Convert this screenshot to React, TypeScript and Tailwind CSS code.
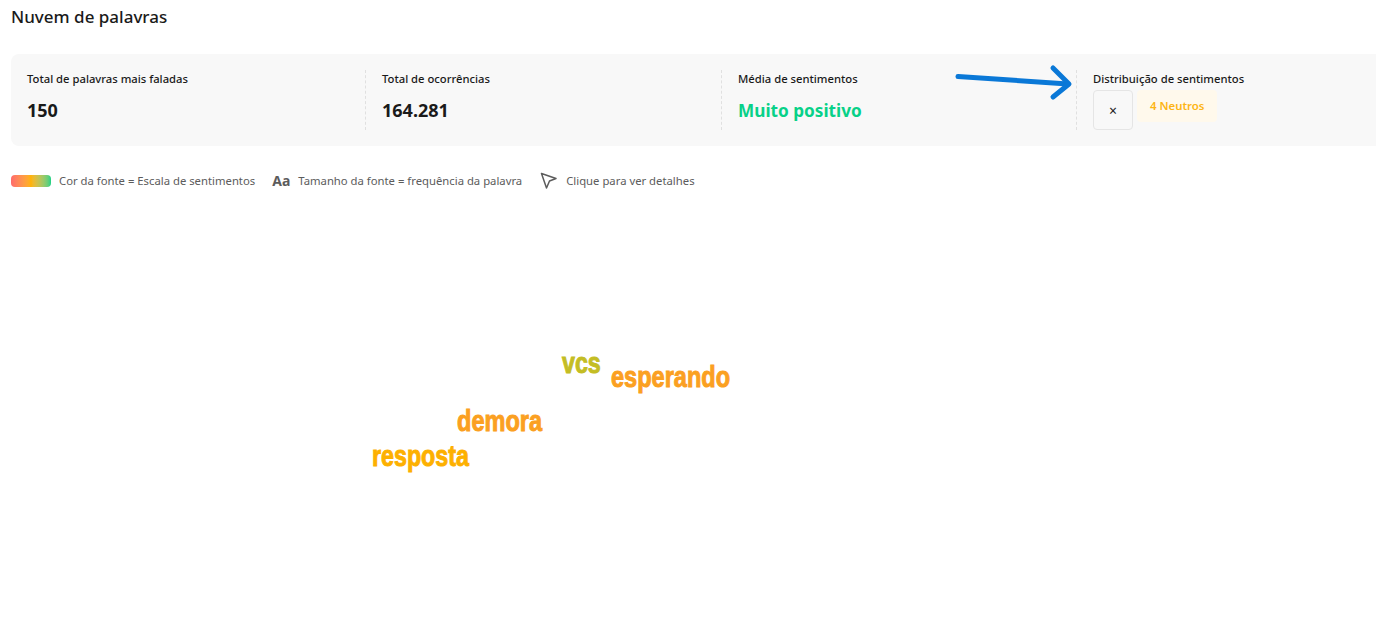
const F = "[font-family:'Noto_Sans','Open_Sans',sans-serif]";

function Stat({ label, children, first, w }: { label: string; children: React.ReactNode; first?: boolean; w: string }) {
  return (
    <div className={`${w} shrink-0 h-[60px] flex flex-col ${first ? "" : "pl-4 border-l border-dashed border-[#e0e0e0]"}`}>
      <div className="text-[11.25px] leading-[18px] font-medium text-[#1a1a1a]">{label}</div>
      {children}
    </div>
  );
}

const words = [
  { t: "vcs", x: 562, y: 349, s: 29, sx: 0.8, c: "#c4bd24" },
  { t: "esperando", x: 611, y: 362, s: 30, sx: 0.785, c: "#fba021" },
  { t: "demora", x: 457, y: 406, s: 30, sx: 0.785, c: "#fba021" },
  { t: "resposta", x: 372, y: 441, s: 30, sx: 0.775, c: "#fdb000" },
];

export default function App() {
  return (
    <div className={`relative w-[1376px] h-[642px] overflow-hidden bg-white ${F}`}>
      <div className="pl-[11px] pt-[5px]">
        <h1 className="text-[17px] leading-[24px] font-medium text-[#1a1a1a]">Nuvem de palavras</h1>
        <div className="mt-[25px] w-[1440px] h-[92px] rounded-lg bg-[#f8f8f8] p-4 flex">
          <Stat label="Total de palavras mais faladas" first w="w-[338px]">
            <div className="mt-[10px] text-[18px] leading-[24px] font-bold text-[#1a1a1a]">150</div>
          </Stat>
          <Stat label="Total de ocorrências" w="w-[356px]">
            <div className="mt-[10px] text-[18px] leading-[24px] font-bold text-[#1a1a1a]">164.281</div>
          </Stat>
          <Stat label="Média de sentimentos" w="w-[355px]">
            <div className="mt-[11px] text-[17.2px] leading-[24px] font-bold text-[#08d188]">Muito positivo</div>
          </Stat>
          <Stat label="Distribuição de sentimentos" w="w-[300px]">
            <div className="mt-[2px] flex gap-[4px] items-start">
              <div className="w-10 h-10 rounded border border-[#e5e5e5] flex items-center justify-center text-[14px] text-[#1a1a1a]">×</div>
              <div className="h-[32px] px-[13px] rounded bg-[#fff9ec] text-[11.4px] leading-[31px] font-semibold text-[#fdb515]">4 Neutros</div>
            </div>
          </Stat>
        </div>
        <div className="mt-[26px] flex items-center text-[11.3px] leading-[18px] text-[#5c5c5c] h-[18px]">
          <span className="w-10 h-3 rounded bg-gradient-to-r from-[#ff6b6b] via-[#ffb300] to-[#0fd185]" />
          <span className="ml-2">Cor da fonte = Escala de sentimentos</span>
          <span className="ml-[17px] text-[14px] font-bold text-[#5c5c5c]">Aa</span>
          <span className="ml-2">Tamanho da fonte = frequência da palavra</span>
          <svg className="ml-[18px]" width="18" height="18" viewBox="0 0 18 18" fill="none" stroke="#5c5c5c" strokeWidth="1.5" strokeLinejoin="round" strokeLinecap="round">
            <path d="M1.5 1.5 L16 6.5 L9.5 9 L6.5 16 Z" />
          </svg>
          <span className="ml-[8px]">Clique para ver detalhes</span>
        </div>
      </div>

      {words.map((w) => (
        <span
          key={w.t}
          className="absolute origin-top-left font-bold leading-none whitespace-nowrap [font-family:'Liberation_Sans',sans-serif] [-webkit-text-stroke:1px_currentColor]"
          style={{ left: w.x, top: w.y, fontSize: w.s, color: w.c, transform: `scaleX(${w.sx})` }}
        >
          {w.t}
        </span>
      ))}

      <svg className="absolute left-[950px] top-[60px]" width="130" height="42" viewBox="0 0 130 42" fill="none" stroke="#0a78d7" strokeWidth="5" strokeLinecap="round" strokeLinejoin="round">
        <path d="M8 16.5 L118 24" />
        <path d="M103 8 L119 24 L103 37" />
      </svg>
    </div>
  );
}
